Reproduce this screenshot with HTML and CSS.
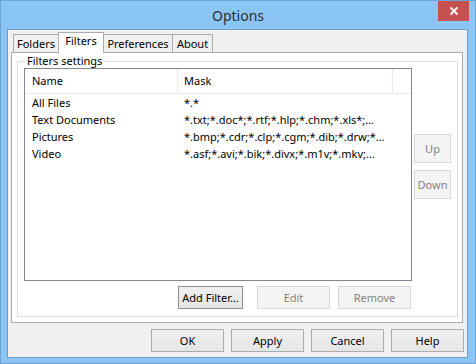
FILE: index.html
```html
<!DOCTYPE html>
<html>
<head>
<meta charset="utf-8">
<link rel="stylesheet" href="styles.css">
</head>
<body>
<div class="window">
  <div class="titlebar">
    <span class="title">Options</span>
    <button class="close" aria-label="Close">
      <svg width="10" height="10" viewBox="0 0 10 10"><path d="M1.5 1.5 L8.5 8.5 M8.5 1.5 L1.5 8.5" stroke="#fff" stroke-width="1.8" fill="none"/></svg>
    </button>
  </div>
  <div class="client">
    <div class="tabs">
      <div class="tab t-folders">Folders</div>
      <div class="tab active t-filters">Filters</div>
      <div class="tab t-prefs">Preferences</div>
      <div class="tab t-about">About</div>
    </div>
    <div class="panel">
      <div class="group">
        <div class="group-head">
          <span class="gh-left"></span>
          <span class="gh-label">Filters settings</span>
          <span class="gh-right"></span>
        </div>
        <div class="group-body">
          <div class="list-area">
            <div class="listview">
              <div class="lv-header">
                <div class="c1">Name</div>
                <div class="c2">Mask</div>
                <div class="c3"></div>
              </div>
              <div class="lv-row"><div class="c1">All Files</div><div class="c2">*.*</div></div>
              <div class="lv-row"><div class="c1">Text Documents</div><div class="c2">*.txt;*.doc*;*.rtf;*.hlp;*.chm;*.xls*;…</div></div>
              <div class="lv-row"><div class="c1">Pictures</div><div class="c2">*.bmp;*.cdr;*.clp;*.cgm;*.dib;*.drw;*…</div></div>
              <div class="lv-row"><div class="c1">Video</div><div class="c2">*.asf;*.avi;*.bik;*.divx;*.m1v;*.mkv;…</div></div>
            </div>
            <div class="side-buttons">
              <button class="btn side" disabled>Up</button>
              <button class="btn side" disabled>Down</button>
            </div>
          </div>
          <div class="row-buttons">
            <button class="btn add">Add Filter…</button>
            <button class="btn edit" disabled>Edit</button>
            <button class="btn remove" disabled>Remove</button>
          </div>
        </div>
      </div>
    </div>
    <div class="dialog-buttons">
      <button class="btn dlg">OK</button>
      <button class="btn dlg">Apply</button>
      <button class="btn dlg">Cancel</button>
      <button class="btn dlg">Help</button>
    </div>
  </div>
</div>
</body>
</html>
```

FILE: styles.css
```css
* { box-sizing: border-box; }

html, body {
  margin: 0;
  padding: 0;
}

body {
  font-family: "Noto Sans", "Open Sans", sans-serif;
  font-size: 11px;
  color: #000;
}

.window {
  width: 476px;
  height: 364px;
  border: 1px solid #6ea5d6;
  background: #8bc5f5;
  display: flex;
  flex-direction: column;
  position: relative;
}

.titlebar {
  height: 28px;
  display: flex;
  align-items: center;
  justify-content: center;
  padding-top: 2px;
}

.title {
  font-size: 14px;
  color: #2e2e2e;
  line-height: 18px;
}

.close {
  position: absolute;
  top: 0;
  right: 6px;
  width: 31px;
  height: 20px;
  border: none;
  padding: 0;
  background: #c75050;
  display: flex;
  align-items: center;
  justify-content: center;
}

.close svg { display: block; }

.client {
  flex: 1;
  margin: 0 7px 5px 6px;
  border: 1px solid #6b9ccc;
  background: #f0f0f0;
  padding: 2px 3px 0;
  display: flex;
  flex-direction: column;
}

.tabs {
  display: flex;
  align-items: flex-end;
  height: 21px;
  padding-left: 2px;
  margin-bottom: -1px;
}

.tab {
  height: 18px;
  margin-bottom: 1px;
  border: 1px solid #acacac;
  border-bottom: none;
  background: #f0f0f0;
  text-align: center;
  line-height: 17px;
  margin-left: -1px;
  white-space: nowrap;
}

.tab:first-child { margin-left: 0; }

.tab.active {
  height: 21px;
  margin-bottom: 0;
  background: #fff;
  position: relative;
  z-index: 1;
  line-height: 16px;
}

.t-folders { width: 46px; }
.t-filters { width: 46px; }
.t-prefs { width: 70px; }
.t-about { width: 41px; }

.panel {
  height: 271px;
  margin-right: 1px;
  border: 1px solid #acacac;
  background: #fff;
  padding: 1px 4px 5px 5px;
  display: flex;
  flex-direction: column;
}

.group {
  flex: 1;
  display: flex;
  flex-direction: column;
}

.group-head {
  display: flex;
  height: 14px;
}

.gh-left,
.gh-right {
  align-self: flex-end;
  height: 7px;
  border-top: 1px solid #dcdcdc;
}

.gh-left {
  width: 8px;
  flex: none;
  border-left: 1px solid #dcdcdc;
}

.gh-right {
  flex: 1;
  border-right: 1px solid #dcdcdc;
}

.gh-label {
  padding: 0 2px;
  line-height: 14px;
  white-space: nowrap;
}

.group-body {
  flex: 1;
  border: 1px solid #dcdcdc;
  border-top: none;
  padding: 0 6px 7px 6px;
  display: flex;
  flex-direction: column;
}

.list-area {
  display: flex;
  gap: 2px;
  height: 213px;
}

.listview {
  width: 388px;
  height: 213px;
  border: 1px solid #828790;
  background: #fff;
}

.lv-header {
  display: flex;
  height: 25px;
  border-bottom: 1px solid #e5ebf3;
}

.lv-header > div {
  line-height: 24px;
  border-right: 1px solid #e5ebf3;
}

.lv-header .c3 { border-right: none; flex: 1; }

.c1 {
  width: 153px;
  padding-left: 7px;
  flex: none;
  white-space: nowrap;
}

.c2 {
  width: 215px;
  padding-left: 6px;
  flex: none;
  white-space: nowrap;
  overflow: hidden;
}

.lv-row {
  display: flex;
  height: 17px;
  line-height: 17px;
}

.side-buttons {
  display: flex;
  flex-direction: column;
  gap: 7px;
  padding-top: 66px;
}

.btn {
  font-family: inherit;
  font-size: 11px;
  color: #000;
  height: 23px;
  padding: 0;
  border: 1px solid #acacac;
  background: linear-gradient(#f0f0f0, #e5e5e5);
  line-height: 20px;
}

.btn:disabled {
  color: #838383;
  border-color: #d9d9d9;
  background: #f4f4f4;
}

.btn.side {
  width: 37px;
  height: 29px;
}

.row-buttons {
  display: flex;
  justify-content: flex-end;
  margin-top: 5px;
  padding-right: 40px;
}

.btn.add { width: 65px; margin-right: 14px; border-color: #8f8f8f; }
.btn.edit { width: 73px; margin-right: 8px; }
.btn.remove { width: 73px; }

.dialog-buttons {
  display: flex;
  justify-content: flex-end;
  gap: 7px;
  margin-top: 6px;
}

.btn.dlg { width: 73px; }
```
